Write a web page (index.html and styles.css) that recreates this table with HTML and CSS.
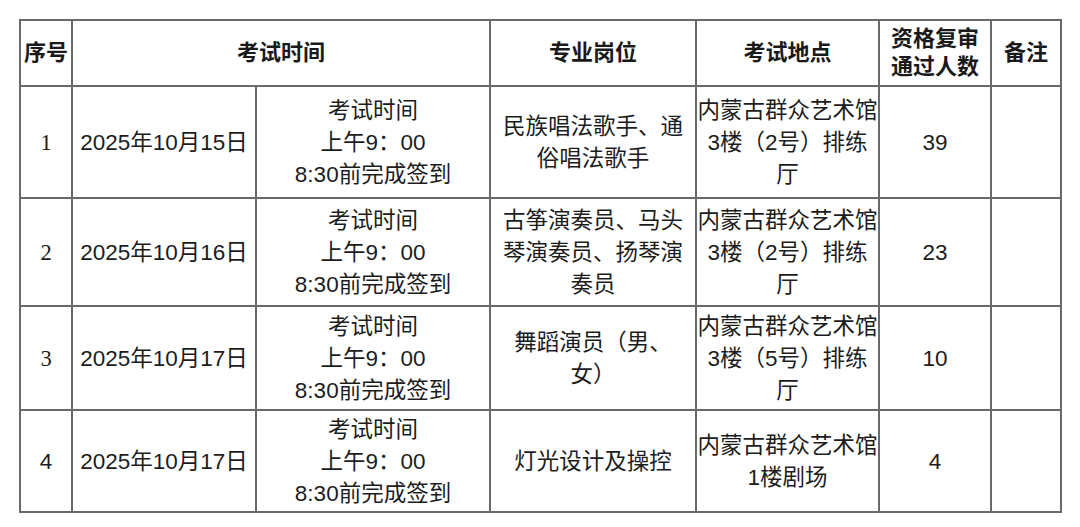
FILE: index.html
```html
<!DOCTYPE html>
<html lang="zh-CN">
<head>
<meta charset="utf-8">
<title>考试安排</title>
<link rel="stylesheet" href="styles.css">
</head>
<body>
<table class="sched">
  <colgroup>
    <col class="c-no">
    <col class="c-date">
    <col class="c-time">
    <col class="c-post">
    <col class="c-place">
    <col class="c-count">
    <col class="c-note">
  </colgroup>
  <thead>
    <tr class="row-head">
      <th>序号</th>
      <th colspan="2">考试时间</th>
      <th>专业岗位</th>
      <th>考试地点</th>
      <th>资格复审<br>通过人数</th>
      <th>备注</th>
    </tr>
  </thead>
  <tbody>
    <tr class="row-1">
      <td class="num">1</td>
      <td>2025年10月15日</td>
      <td>考试时间<br>上午9：00<br>8:30前完成签到</td>
      <td>民族唱法歌手、通<br>俗唱法歌手</td>
      <td>内蒙古群众艺术馆<br>3楼（2号）排练<br>厅</td>
      <td>39</td>
      <td></td>
    </tr>
    <tr class="row-2">
      <td class="num">2</td>
      <td>2025年10月16日</td>
      <td>考试时间<br>上午9：00<br>8:30前完成签到</td>
      <td>古筝演奏员、马头<br>琴演奏员、扬琴演<br>奏员</td>
      <td>内蒙古群众艺术馆<br>3楼（2号）排练<br>厅</td>
      <td>23</td>
      <td></td>
    </tr>
    <tr class="row-3">
      <td class="num">3</td>
      <td>2025年10月17日</td>
      <td>考试时间<br>上午9：00<br>8:30前完成签到</td>
      <td>舞蹈演员（男、<br>女）</td>
      <td>内蒙古群众艺术馆<br>3楼（5号）排练<br>厅</td>
      <td>10</td>
      <td></td>
    </tr>
    <tr class="row-4">
      <td>4</td>
      <td>2025年10月17日</td>
      <td>考试时间<br>上午9：00<br>8:30前完成签到</td>
      <td>灯光设计及操控</td>
      <td>内蒙古群众艺术馆<br>1楼剧场</td>
      <td>4</td>
      <td></td>
    </tr>
  </tbody>
</table>
</body>
</html>
```

FILE: styles.css
```css
html, body {
  margin: 0;
  background: #ffffff;
}

body {
  padding: 19px 0 0 19px;
  font-family: "Liberation Sans", "Noto Sans CJK SC", sans-serif;
  color: #1c1c1c;
}

.sched {
  border-collapse: collapse;
  table-layout: fixed;
  width: 1041px;
}

.c-no { width: 52px; }
.c-date { width: 184px; }
.c-time { width: 234px; }
.c-post { width: 206px; }
.c-place { width: 183px; }
.c-count { width: 112px; }
.c-note { width: 70px; }

.sched th,
.sched td {
  border: 2px solid #6a6a6a;
  padding: 0;
  text-align: center;
  vertical-align: middle;
  font-size: 22.5px;
  white-space: nowrap;
}

.sched th {
  font-weight: bold;
  font-size: 22px;
  line-height: 28px;
  color: #1a1a1a;
}

.sched td {
  font-weight: normal;
  line-height: 32px;
  padding-top: 2px;
}

.sched td.num {
  font-family: "Liberation Serif", "Noto Sans CJK SC", serif;
}

.row-head { height: 66px; }
.row-1 { height: 112px; }
.row-2 { height: 108px; }
.row-3 { height: 104px; }
.row-4 { height: 102px; }
```
